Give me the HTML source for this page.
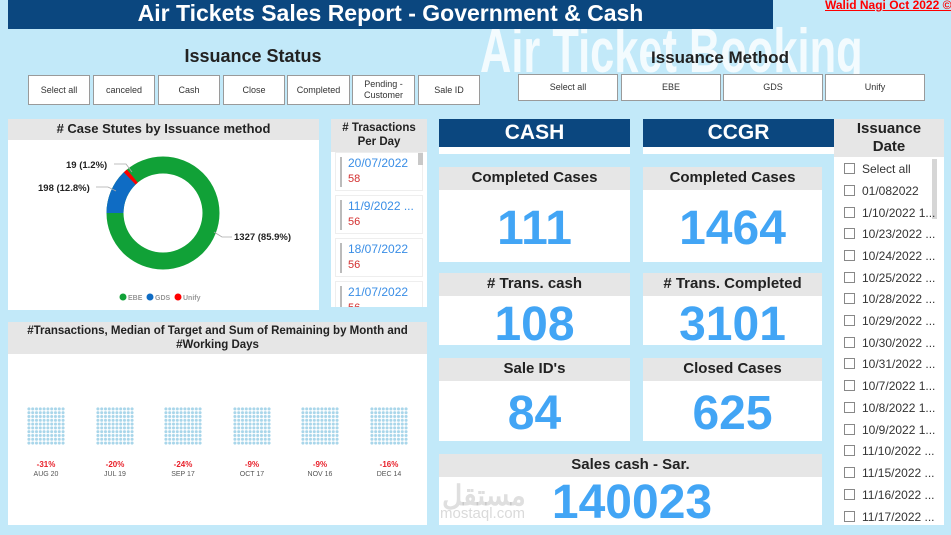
<!DOCTYPE html>
<html><head><meta charset="utf-8"><style>
*{margin:0;padding:0;box-sizing:border-box}
body{width:951px;height:535px;overflow:hidden;background:#c2e9f9;font-family:"Liberation Sans",sans-serif;position:relative}
.a{position:absolute}
.btn{position:absolute;background:#fff;border:1px solid #9a9a9a;font-size:9px;color:#333;display:flex;align-items:center;justify-content:center;text-align:center;line-height:11px}
.gh{position:absolute;background:#e6e6e6;color:#222;font-weight:bold;text-align:center}
.wh{position:absolute;background:#fff}
.big{position:absolute;color:#42a5f5;font-weight:bold;text-align:center;font-size:48px}
.blue{position:absolute;background:#0b477f;color:#fff;font-weight:bold;text-align:center;font-size:21px}
.dots{position:absolute;width:38px;height:38px;background-color:#fff;background-image:radial-gradient(circle,#a9d6ea 1.5px,rgba(0,0,0,0) 1.7px);background-size:3.8px 3.8px;top:407px}
.pct{position:absolute;top:460px;width:60px;text-align:center;color:#e8202a;font-size:8px;font-weight:bold}
.mon{position:absolute;top:471px;width:60px;text-align:center;color:#555;font-size:7px}
.row{position:absolute;left:844px;font-size:12px;color:#333}
.row span{display:inline-block;width:11px;height:11px;border:1px solid #888;vertical-align:-1px;margin-right:7px;background:#fff}
.card{position:absolute;left:335px;width:88px;height:39px;background:#fff;border:1px solid #eee}
.card i{position:absolute;left:4px;top:4px;width:2px;height:30px;background:#bbb}
.card b{position:absolute;left:12px;top:3px;font-weight:normal;color:#3a8ee6;font-size:12px}
.card em{position:absolute;left:12px;top:20px;font-style:normal;color:#d32f2f;font-size:11px}
</style></head><body>
<div class="a" style="left:480px;top:16px;font-size:62px;font-weight:bold;color:rgba(255,255,255,0.8);white-space:nowrap;transform:scaleX(0.7);transform-origin:0 0">Air Ticket Booking</div>
<div class="a" style="left:8px;top:0;width:765px;height:29px;background:#0b477f;color:#fff;font-weight:bold;font-size:23px;text-align:center;line-height:27px">Air Tickets Sales Report - Government &amp; Cash</div>
<div class="a" style="left:825px;top:-2px;color:#f00;font-size:12px;font-weight:bold;text-decoration:underline;white-space:nowrap">Walid Nagi Oct 2022 ©</div>

<div class="a" style="left:150px;top:46px;width:206px;text-align:center;font-size:18px;font-weight:bold;color:#222">Issuance Status</div>
<div class="btn" style="left:28px;top:75px;width:62px;height:30px">Select all</div>
<div class="btn" style="left:93px;top:75px;width:62px;height:30px">canceled</div>
<div class="btn" style="left:158px;top:75px;width:62px;height:30px">Cash</div>
<div class="btn" style="left:223px;top:75px;width:62px;height:30px">Close</div>
<div class="btn" style="left:287px;top:75px;width:63px;height:30px">Completed</div>
<div class="btn" style="left:352px;top:75px;width:63px;height:30px">Pending -<br>Customer</div>
<div class="btn" style="left:418px;top:75px;width:62px;height:30px">Sale ID</div>

<div class="a" style="left:620px;top:48px;width:200px;text-align:center;font-size:17px;font-weight:bold;color:#222">Issuance Method</div>
<div class="btn" style="left:518px;top:74px;width:100px;height:27px">Select all</div>
<div class="btn" style="left:621px;top:74px;width:100px;height:27px">EBE</div>
<div class="btn" style="left:723px;top:74px;width:100px;height:27px">GDS</div>
<div class="btn" style="left:825px;top:74px;width:100px;height:27px">Unify</div>

<div class="wh" style="left:8px;top:119px;width:311px;height:191px"></div>
<div class="gh" style="left:8px;top:119px;width:311px;height:21px;font-size:13px;line-height:20px">#&nbsp;Case Stutes by Issuance method</div>
<svg class="a" style="left:8px;top:140px" width="311" height="170">
<g transform="translate(155,73)">
<circle r="48" fill="none" stroke="#11a137" stroke-width="17"/>
<circle r="48" fill="none" stroke="#0f6cc4" stroke-width="17" stroke-dasharray="38.6 300" transform="rotate(-180)"/>
<circle r="48" fill="none" stroke="#f00" stroke-width="17" stroke-dasharray="3.6 300" transform="rotate(-133.9)"/>
</g>
<polyline points="106,24 118,24 124,32" fill="none" stroke="#aaa" stroke-width="0.8"/>
<polyline points="88,47 100,47 108,51" fill="none" stroke="#aaa" stroke-width="0.8"/>
<polyline points="206,92 214,97 224,97" fill="none" stroke="#aaa" stroke-width="0.8"/>
<text x="58" y="28" font-size="9.5" font-weight="bold" fill="#222" font-family="Liberation Sans">19 (1.2%)</text>
<text x="30" y="51" font-size="9.5" font-weight="bold" fill="#222" font-family="Liberation Sans">198 (12.8%)</text>
<text x="226" y="100" font-size="9.5" font-weight="bold" fill="#222" font-family="Liberation Sans">1327 (85.9%)</text>
<circle cx="115" cy="157" r="3.5" fill="#11a137"/><text x="120" y="160" font-size="7" fill="#999" font-weight="bold" font-family="Liberation Sans">EBE</text>
<circle cx="142" cy="157" r="3.5" fill="#0f6cc4"/><text x="147" y="160" font-size="7" fill="#999" font-weight="bold" font-family="Liberation Sans">GDS</text>
<circle cx="170" cy="157" r="3.5" fill="#f00"/><text x="175" y="160" font-size="7" fill="#999" font-weight="bold" font-family="Liberation Sans">Unify</text>
</svg>

<div class="wh" style="left:331px;top:119px;width:96px;height:188px"></div>
<div class="gh" style="left:331px;top:119px;width:96px;height:33px;font-size:11.5px;line-height:14px;padding-top:2px"># Trasactions<br>Per Day</div>
<div class="a" style="left:331px;top:152px;width:96px;height:155px;overflow:hidden">
<div class="card" style="left:4px;top:0"><i></i><b>20/07/2022</b><em>58</em></div>
<div class="card" style="left:4px;top:43px"><i></i><b>11/9/2022 ...</b><em>56</em></div>
<div class="card" style="left:4px;top:86px"><i></i><b>18/07/2022</b><em>56</em></div>
<div class="card" style="left:4px;top:129px"><i></i><b>21/07/2022</b><em>56</em></div>
</div>
<div class="a" style="left:418px;top:153px;width:5px;height:12px;background:#c8c8c8"></div>

<div class="wh" style="left:8px;top:322px;width:419px;height:203px"></div>
<div class="gh" style="left:8px;top:322px;width:419px;height:32px;font-size:11.5px;line-height:14px;padding-top:2px">#Transactions, Median of Target and Sum of Remaining by Month and<br>#Working Days</div>
<div class="dots" style="left:27px"></div><div class="dots" style="left:96px"></div><div class="dots" style="left:164px"></div><div class="dots" style="left:233px"></div><div class="dots" style="left:301px"></div><div class="dots" style="left:370px"></div>
<div class="pct" style="left:16px">-31%</div><div class="pct" style="left:85px">-20%</div><div class="pct" style="left:153px">-24%</div><div class="pct" style="left:222px">-9%</div><div class="pct" style="left:290px">-9%</div><div class="pct" style="left:359px">-16%</div>
<div class="mon" style="left:16px">AUG 20</div><div class="mon" style="left:85px">JUL 19</div><div class="mon" style="left:153px">SEP 17</div><div class="mon" style="left:222px">OCT 17</div><div class="mon" style="left:290px">NOV 16</div><div class="mon" style="left:359px">DEC 14</div>

<div class="wh" style="left:439px;top:119px;width:191px;height:35px"></div>
<div class="blue" style="left:439px;top:119px;width:191px;height:28px;line-height:28px">CASH</div>
<div class="wh" style="left:643px;top:119px;width:191px;height:35px"></div>
<div class="blue" style="left:643px;top:119px;width:191px;height:28px;line-height:28px">CCGR</div>

<div class="wh" style="left:439px;top:167px;width:191px;height:95px"></div>
<div class="gh" style="left:439px;top:167px;width:191px;height:23px;font-size:15px;line-height:22px">Completed Cases</div>
<div class="big" style="left:439px;top:201px;width:191px;line-height:55px">111</div>
<div class="wh" style="left:643px;top:167px;width:179px;height:95px"></div>
<div class="gh" style="left:643px;top:167px;width:179px;height:23px;font-size:15px;line-height:22px">Completed Cases</div>
<div class="big" style="left:643px;top:201px;width:179px;line-height:55px">1464</div>

<div class="wh" style="left:439px;top:273px;width:191px;height:72px"></div>
<div class="gh" style="left:439px;top:273px;width:191px;height:23px;font-size:15px;line-height:22px"># Trans. cash</div>
<div class="big" style="left:439px;top:297px;width:191px;line-height:55px">108</div>
<div class="wh" style="left:643px;top:273px;width:179px;height:72px"></div>
<div class="gh" style="left:643px;top:273px;width:179px;height:23px;font-size:15px;line-height:22px"># Trans. Completed</div>
<div class="big" style="left:643px;top:297px;width:179px;line-height:55px">3101</div>

<div class="wh" style="left:439px;top:358px;width:191px;height:83px"></div>
<div class="gh" style="left:439px;top:358px;width:191px;height:23px;font-size:15px;line-height:22px">Sale ID's</div>
<div class="big" style="left:439px;top:386px;width:191px;line-height:55px">84</div>
<div class="wh" style="left:643px;top:358px;width:179px;height:83px"></div>
<div class="gh" style="left:643px;top:358px;width:179px;height:23px;font-size:15px;line-height:22px">Closed Cases</div>
<div class="big" style="left:643px;top:386px;width:179px;line-height:55px">625</div>

<div class="wh" style="left:439px;top:454px;width:383px;height:71px"></div>
<div class="gh" style="left:439px;top:454px;width:383px;height:23px;font-size:15px;line-height:22px">Sales cash - Sar.</div>
<div class="a" style="left:442px;top:474px;font-size:28px;font-weight:bold;color:rgba(150,150,150,0.3);font-family:'Noto Sans CJK SC',sans-serif">مستقل</div>
<div class="a" style="left:440px;top:505px;font-size:15px;color:rgba(150,150,150,0.35)">mostaql.com</div>
<div class="big" style="left:532px;top:477px;width:200px;line-height:52px">140023</div>

<div class="wh" style="left:834px;top:119px;width:110px;height:406px"></div>
<div class="gh" style="left:834px;top:119px;width:110px;height:38px;font-size:15px;line-height:18px;padding-top:1px">Issuance<br>Date</div>
<div class="a" style="left:932px;top:159px;width:5px;height:60px;background:#d6d6d6"></div>
<div class="row" style="top:162px"><span></span>Select all</div>
<div class="row" style="top:184px"><span></span>01/082022</div>
<div class="row" style="top:206px"><span></span>1/10/2022 1...</div>
<div class="row" style="top:227px"><span></span>10/23/2022 ...</div>
<div class="row" style="top:249px"><span></span>10/24/2022 ...</div>
<div class="row" style="top:271px"><span></span>10/25/2022 ...</div>
<div class="row" style="top:292px"><span></span>10/28/2022 ...</div>
<div class="row" style="top:314px"><span></span>10/29/2022 ...</div>
<div class="row" style="top:336px"><span></span>10/30/2022 ...</div>
<div class="row" style="top:357px"><span></span>10/31/2022 ...</div>
<div class="row" style="top:379px"><span></span>10/7/2022 1...</div>
<div class="row" style="top:401px"><span></span>10/8/2022 1...</div>
<div class="row" style="top:423px"><span></span>10/9/2022 1...</div>
<div class="row" style="top:444px"><span></span>11/10/2022 ...</div>
<div class="row" style="top:466px"><span></span>11/15/2022 ...</div>
<div class="row" style="top:488px"><span></span>11/16/2022 ...</div>
<div class="row" style="top:510px"><span></span>11/17/2022 ...</div>
</body></html>
